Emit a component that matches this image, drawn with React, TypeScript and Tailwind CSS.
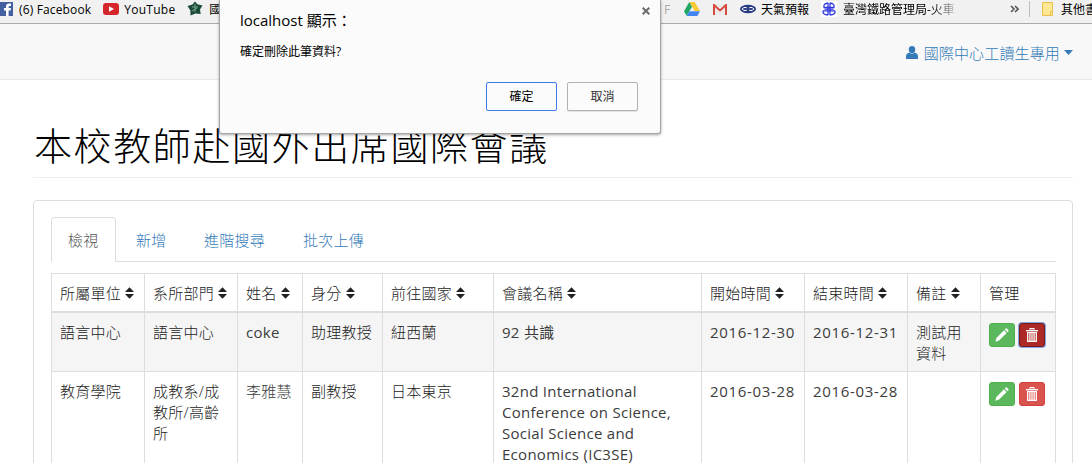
import React from "react";

const SANS = "font-['Open_Sans','Noto_Sans_CJK_TC',sans-serif]";

function SortIcon() {
  return (
    <svg className="ml-1 h-3 w-[9px] shrink-0" viewBox="0 0 9 12" fill="#222">
      <path d="M4.5 0.3 L9 5 H0Z M0 7 H9 L4.5 11.7Z" />
    </svg>
  );
}

function PencilIcon() {
  return (
    <svg className="h-[14px] w-[14px]" viewBox="0 0 14 14" fill="#fff">
      <path d="M0.3 13.7 L1.4 9.9 L9 2.3 L11.7 5 L4.1 12.6Z" />
      <path d="M9.8 1.5 L10.7 0.6 Q11.4 0 12.1 0.7 L13.3 1.9 Q14 2.6 13.4 3.3 L12.5 4.2Z" />
    </svg>
  );
}

function TrashIcon() {
  return (
    <svg className="-mt-px h-[14px] w-3" viewBox="0 0 12 14" fill="none">
      <path d="M4 1.8 V0.6 H8 V1.8" stroke="#fff" strokeWidth="1.1" />
      <path d="M0 2 H12 V3.4 H0Z" fill="#fff" />
      <path d="M1.7 4.5 V13.3 H10.3 V4.5 M3.9 5 V13 M6 5 V13 M8.1 5 V13" stroke="#fff" strokeWidth="1.3" />
      <path d="M1.2 4 H10.8 V5 H1.2Z" fill="#fff" />
    </svg>
  );
}

type Column = { label: string; width: string; sortable: boolean };

const columns: Column[] = [
  { label: "所屬單位", width: "w-[93px]", sortable: true },
  { label: "系所部門", width: "w-[93px]", sortable: true },
  { label: "姓名", width: "w-[65px]", sortable: true },
  { label: "身分", width: "w-[80px]", sortable: true },
  { label: "前往國家", width: "w-[111px]", sortable: true },
  { label: "會議名稱", width: "w-[208px]", sortable: true },
  { label: "開始時間", width: "w-[103px]", sortable: true },
  { label: "結束時間", width: "w-[103px]", sortable: true },
  { label: "備註", width: "w-[73px]", sortable: true },
  { label: "管理", width: "w-[75px]", sortable: false },
];

const cellText: string[] = [
  "font-light text-[#222]",
  "font-light text-[#222]",
  "text-[#3c3c3c]",
  "font-light text-[#222]",
  "font-light text-[#222]",
  "text-[#3c3c3c]",
  "text-[#3c3c3c] tracking-[0.68px]",
  "text-[#3c3c3c] tracking-[0.68px]",
  "font-light text-[#222]",
];

const rows: string[][][] = [
  [["語言中心"], ["語言中心"], ["coke"], ["助理教授"], ["紐西蘭"], ["92 共識"], ["2016-12-30"], ["2016-12-31"], ["測試用", "資料"]],
  [
    ["教育學院"],
    ["成教系/成", "教所/高齡", "所"],
    ["李雅慧"],
    ["副教授"],
    ["日本東京"],
    ["32nd International", "Conference on Science,", "Social Science and", "Economics (IC3SE)"],
    ["2016-03-28"],
    ["2016-03-28"],
    [],
  ],
];

function BookmarkBar() {
  return (
    <div className="flex h-6 items-start overflow-hidden border-b border-[#a9a9a9] bg-[#f1f1f1] text-[12px] leading-[20px] whitespace-nowrap text-black">
      <div className="flex w-[220px] shrink-0 overflow-hidden">
        <svg className="mt-[2px] -ml-[3px] h-[14px] w-4 shrink-0" viewBox="0 0 16 14">
          <rect width="16" height="14" fill="#4460a0" />
          <path d="M9 14 V8.5 H7 V6 H9 V4.5 Q9 1.6 12 1.6 H14 V4 H12.6 Q11.6 4 11.6 5 V6 H14 L13.6 8.5 H11.6 V14Z" fill="#fff" />
        </svg>
        <span className="ml-[6px] w-[73px] tracking-[0.15px]">(6) Facebook</span>
        <svg className="mt-[3px] ml-[12px] h-3 w-4 shrink-0" viewBox="0 0 16 12">
          <rect width="16" height="12" rx="3" fill="#d5262b" />
          <path d="M6 3.2 L11 6 L6 8.8Z" fill="#fff" />
        </svg>
        <span className="ml-[5px] w-[51px] tracking-[0.25px]">YouTube</span>
        <svg className="mt-[1px] ml-[12px] h-[15px] w-4 shrink-0" viewBox="0 0 16 15">
          <path d="M8 0.5 L10.3 3.2 L15.5 4.5 L13 8.5 L13.7 13 L8.5 12.5 L3.5 14.5 L3.4 9.5 L0.5 5 L5.5 3.5Z" fill="#1c4b39" />
          <path d="M5 6 H11 M8 3 V11 M5 10 L10 7" stroke="#78a58c" fill="none" />
        </svg>
        <span className="ml-[6px]">國</span>
      </div>
      <div className="w-[440px] shrink-0" />
      <div className="flex shrink-0">
        <span className="ml-[4px] w-[8px] text-[#aaa]">F</span>
        <svg className="mt-[2px] ml-[12px] h-[14px] w-4 shrink-0" viewBox="0 0 16 14">
          <path d="M5.3 0 H10.7 L16 9 H10.7Z" fill="#fbc934" />
          <path d="M5.3 0 L0 9.3 L2.7 14 L8 4.7Z" fill="#23a566" />
          <path d="M5.5 9.3 H16 L13.3 14 H2.7Z" fill="#4285f4" />
        </svg>
        <svg className="mt-[4px] ml-[13px] h-[11px] w-[14px] shrink-0" viewBox="0 0 14 11">
          <rect width="14" height="11" rx="1" fill="#eceaea" />
          <path d="M1 11 V1 L7 6.5 L13 1 V11" stroke="#d54b3d" strokeWidth="2" fill="none" />
        </svg>
        <svg className="mt-[4px] ml-[13px] h-[10px] w-4 shrink-0" viewBox="0 0 16 10">
          <ellipse cx="8" cy="5" rx="8" ry="4.2" fill="#293d83" />
          <path d="M2 5 Q5 1.8 8 5 Q11 8.2 14 5 M2 5 Q5 8.2 8 5 Q11 1.8 14 5" stroke="#fff" fill="none" />
          <circle cx="8" cy="5" r="1.6" fill="#293d83" />
        </svg>
        <span className="ml-[5px] w-[48px]">天氣預報</span>
        <svg className="mt-[1px] ml-[12px] h-4 w-4 shrink-0" viewBox="0 0 16 16">
          <rect width="16" height="16" fill="#fff" />
          <g stroke="#3039dc" strokeWidth="1.3" fill="none">
            <path d="M7.2 2 Q2 2.5 3 6.5 H13 Q14 2.5 8.8 2" />
            <path d="M7.2 14 Q1 13.5 2.2 9.8 H13.8 Q15 13.5 8.8 14" />
            <path d="M7 2 V14 M9 2 V14 M3.5 8.1 H12.5" />
          </g>
        </svg>
        <span className="ml-[6px] w-[117px] bg-linear-to-r from-black from-70% to-[#f1f1f1] bg-clip-text text-transparent">臺灣鐵路管理局-火車</span>
      </div>
      <svg className="mt-[5px] ml-[50px] h-[8px] w-[9px] shrink-0" viewBox="0 0 9 8" fill="none" stroke="#555" strokeWidth="1.6">
        <path d="M1 1 L4 4 L1 7 M5 1 L8 4 L5 7" />
      </svg>
      <div className="mt-[1px] ml-[10px] h-4 w-px shrink-0 bg-[#bcbcbc]" />
      <svg className="mt-[2px] ml-[12px] h-[14px] w-[11px] shrink-0" viewBox="0 0 11 14">
        <path d="M0.5 0.5 H10.5 V13.5 H0.5Z" fill="#ffe893" stroke="#e9c04c" />
        <path d="M8.5 13 V9.5 H10.5" fill="none" stroke="#e9c04c" />
      </svg>
      <span className="ml-[8px]">其他書</span>
    </div>
  );
}

function ConfirmDialog() {
  return (
    <div className="absolute top-0 left-[219px] flex h-[134px] w-[442px] flex-col rounded-b-[3px] border border-t-0 border-[#a5a5a5] bg-[#fbfbfb] pl-[20px] text-black shadow-[0_1px_3px_rgba(0,0,0,0.35)]">
      <div className="flex justify-between">
        <span className="mt-[9px] text-[15px] leading-[22px]">localhost 顯示：</span>
        <svg className="mt-[7px] mr-[10px] h-[8px] w-[8px]" viewBox="0 0 8 8" stroke="#6c6c6c" strokeWidth="2">
          <path d="M0.7 0.7 L7.3 7.3 M7.3 0.7 L0.7 7.3" />
        </svg>
      </div>
      <span className="mt-[12px] text-[12px] leading-[18px]">確定刪除此筆資料?</span>
      <div className="mt-[21px] mr-[22px] flex justify-end gap-[10px] text-[12px]">
        <button className="h-[29px] w-[71px] rounded-[2px] border border-[#3d7bea] bg-[#fbfbfb]">確定</button>
        <button className="h-[29px] w-[71px] rounded-[2px] border border-[#b2b2b2] bg-[#fbfbfb] text-[#333] shadow-[0_1px_1px_rgba(0,0,0,0.1)]">取消</button>
      </div>
    </div>
  );
}

export default function App() {
  return (
    <div className={`relative h-[463px] w-[1092px] overflow-hidden bg-white ${SANS}`}>
      <BookmarkBar />
      <nav className="flex h-14 items-center justify-end border-b border-[#e7e7e7] bg-[#f8f8f8] pr-[19px] text-[15px] tracking-[0.15px] text-[#337ab7]">
        <svg className="mt-[2px] mr-[6px] h-[13px] w-3" viewBox="0 0 11 13" preserveAspectRatio="none" fill="#337ab7">
          <ellipse cx="5.5" cy="3.6" rx="3" ry="3.6" />
          <path d="M3 6.5 Q5.5 9 8 6.5 Q11 7.5 11 10.5 V13 H0 V10.5 Q0 7.5 3 6.5Z" />
        </svg>
        <span className="pt-[3px] font-light">國際中心工讀生專用</span>
        <svg className="mt-[2px] ml-[4px] h-[5px] w-[9px]" viewBox="0 0 9 5" fill="#337ab7">
          <path d="M0 0 H9 L4.5 5Z" />
        </svg>
      </nav>
      <main className="pl-[33px]">
        <h1 className="h-[98px] w-[1040px] border-b border-[#eee] pt-[41px] pl-px text-[38px] leading-[48px] font-light tracking-[1.6px] whitespace-nowrap text-black">本校教師赴國外出席國際會議</h1>
        <section className="mt-[22px] h-[400px] w-[1040px] rounded-[4px] border border-[#ddd] px-[17px] pt-4 text-[15px] leading-[21px] tracking-[0.28px] text-[#333]">
          <div className="flex h-[45px] w-[1005px] border-b border-[#ddd] font-light text-[#337ab7]">
            <div className="h-[45px] w-[65px] rounded-t-[4px] border border-b-0 border-[#ddd] bg-white pt-[12px] pl-4 text-[#555]">檢視</div>
            <div className="w-[68px] pt-[13px] pl-5">新增</div>
            <div className="w-[99px] pt-[13px] pl-5">進階搜尋</div>
            <div className="pt-[13px] pl-5">批次上傳</div>
          </div>
          <table className="mt-[11px] w-[1005px] table-fixed border-separate border-spacing-0 border-t border-l border-[#ddd]">
            <thead>
              <tr>
                {columns.map((c) => (
                  <th key={c.label} className={`${c.width} border-r border-b-2 border-[#ddd] p-0 font-light text-[#222]`}>
                    <div className="flex h-[37px] items-center pt-px pl-2 whitespace-nowrap">
                      {c.label}
                      {c.sortable && <SortIcon />}
                    </div>
                  </th>
                ))}
              </tr>
            </thead>
            <tbody>
              {rows.map((row, i) => (
                <tr key={i} className={i === 0 ? "bg-[#f5f5f5]" : "bg-white"}>
                  {row.map((lines, j) => (
                    <td key={j} className={`border-r border-b border-[#ddd] pt-[9px] pr-0 pb-[7px] pl-2 align-top whitespace-nowrap ${cellText[j]}`}>
                      {lines.map((line) => (
                        <div key={line} className={line === "李雅慧" ? "font-light" : ""}>{line}</div>
                      ))}
                    </td>
                  ))}
                  <td className="border-r border-b border-[#ddd] p-0 align-top">
                    <div className="flex gap-1 pt-[10px] pl-2">
                      <button className="flex h-6 w-[26px] items-center justify-center rounded-[3px] border border-[#4cae4c] bg-[#5cb85c]">
                        <PencilIcon />
                      </button>
                      {i === 0 ? (
                        <button className="flex h-6 w-[26px] items-center justify-center rounded-[3px] border border-[#761c19] bg-[#ac2925] shadow-[0_0_0_1px_#84a5e8]">
                          <TrashIcon />
                        </button>
                      ) : (
                        <button className="flex h-6 w-[26px] items-center justify-center rounded-[3px] border border-[#d43f3a] bg-[#d9534f]">
                          <TrashIcon />
                        </button>
                      )}
                    </div>
                  </td>
                </tr>
              ))}
            </tbody>
          </table>
        </section>
      </main>
      <ConfirmDialog />
    </div>
  );
}
